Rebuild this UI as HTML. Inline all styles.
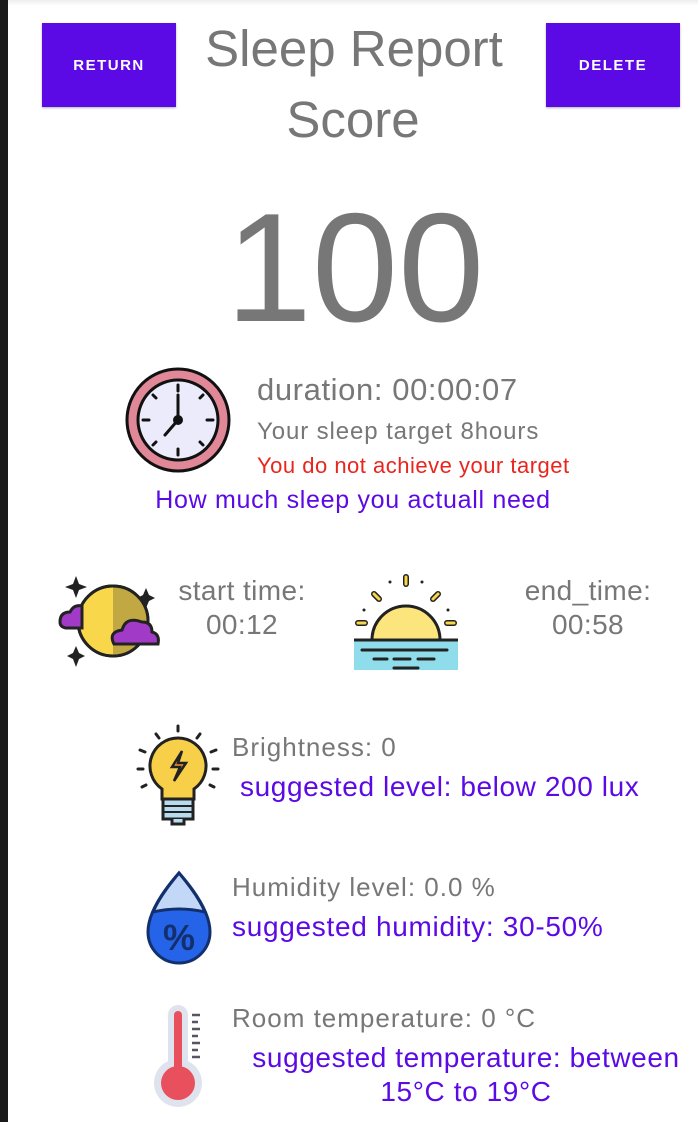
<!DOCTYPE html>
<html><head><meta charset="utf-8"><style>
body{margin:0;width:698px;height:1122px;background:#fff;position:relative;overflow:hidden;font-family:"Liberation Sans",sans-serif;color:#777}
.a{position:absolute;white-space:nowrap}
.btn{position:absolute;top:23px;width:134px;height:84px;background:#5b0ae6;color:#fff;font-size:15px;font-weight:bold;letter-spacing:1.5px;display:flex;align-items:center;justify-content:center;box-shadow:0 1px 2px rgba(0,0,0,.3)}
.c{text-align:center;transform:translateX(-50%)}
.p{color:#5b0ae6}
</style></head><body>
<div class="a" style="left:0;top:0;width:8px;height:1122px;background:#1a1a1a"></div>
<div class="a" style="left:8px;top:0;width:690px;height:6px;background:linear-gradient(#eee,#fff)"></div>
<div class="btn" style="left:42px">RETURN</div>
<div class="btn" style="left:546px">DELETE</div>
<div class="a c" style="left:354px;top:22px;font-size:51px;line-height:54px">Sleep Report</div>
<div class="a c" style="left:353px;top:93px;font-size:51px;line-height:54px">Score</div>
<div class="a c" style="left:355px;top:190px;font-size:155px;line-height:155px">100</div>

<svg class="a" style="left:125px;top:367px" width="106" height="106" viewBox="0 0 106 106">
<circle cx="53" cy="53" r="51" fill="#e08898" stroke="#111" stroke-width="3"/>
<circle cx="53" cy="53" r="40" fill="#ecebfb" stroke="#111" stroke-width="3"/>
<g stroke="#111" stroke-width="3" stroke-linecap="round">
<line x1="53" y1="18" x2="53" y2="24"/><line x1="53" y1="82" x2="53" y2="88"/><line x1="18" y1="53" x2="24" y2="53"/><line x1="82" y1="53" x2="88" y2="53"/>
<line x1="28" y1="28" x2="31" y2="31"/><line x1="78" y1="28" x2="75" y2="31"/><line x1="28" y1="78" x2="31" y2="75"/><line x1="78" y1="78" x2="75" y2="75"/>
<line x1="53" y1="53" x2="53" y2="28"/><line x1="53" y1="53" x2="40" y2="68"/></g>
<circle cx="53" cy="53" r="5" fill="#111"/></svg>
<div class="a" style="left:257px;top:372px;font-size:31px;letter-spacing:0.6px">duration: 00:00:07</div>
<div class="a" style="left:257px;top:418px;font-size:24px;letter-spacing:0.9px">Your sleep target 8hours</div>
<div class="a" style="left:257px;top:453px;font-size:22px;letter-spacing:0.5px;color:#e8261e">You do not achieve your target</div>
<div class="a c p" style="left:353px;top:486px;font-size:25px;letter-spacing:0.7px">How much sleep you actuall need</div>

<svg class="a" style="left:56px;top:574px" width="106" height="96" viewBox="0 0 106 96">
<circle cx="57" cy="47" r="35" fill="#f8d84a" stroke="#222" stroke-width="3"/>
<path d="M57 12 A35 35 0 0 1 57 82Z" fill="#c2a842"/>
<circle cx="57" cy="47" r="35" fill="none" stroke="#222" stroke-width="3"/>
<path d="M4 48 q0-10 10-10 q4-8 12-6 v22 h-16 q-6-1-6-6z" fill="#a23ac8" stroke="#222" stroke-width="3"/>
<path d="M58 70 q-6-12 8-14 q4-14 20-8 q10 0 10 10 q8 2 6 12 z" fill="#a23ac8" stroke="#222" stroke-width="3"/>
<path d="M20 2 l3 8 8 3-8 3-3 8-3-8-8-3 8-3z M90 14 l3 7 6 3-6 3-3 7-3-7-6-3 6-3z M20 72 l3 7 6 3-6 3-3 8-3-8-6-3 6-3z" fill="#222"/></svg>
<div class="a c" style="left:242px;top:574px;font-size:28px;letter-spacing:0.4px;line-height:34px">start time:<br>00:12</div>

<svg class="a" style="left:352px;top:572px" width="108" height="100" viewBox="0 0 108 100">
<path d="M20 68 a34 34 0 0 1 68 0z" fill="#fbe57c" stroke="#222" stroke-width="3"/>
<rect x="2" y="68" width="104" height="30" fill="#8fdcea"/>
<line x1="2" y1="68" x2="106" y2="68" stroke="#222" stroke-width="3"/>
<g stroke="#222" stroke-width="3" stroke-linecap="round"><line x1="10" y1="78" x2="95" y2="78"/><line x1="22" y1="87" x2="35" y2="87"/><line x1="42" y1="87" x2="58" y2="87"/><line x1="66" y1="87" x2="82" y2="87"/><line x1="42" y1="96" x2="66" y2="96"/></g>
<g stroke="#222" stroke-width="6" stroke-linecap="round"><line x1="54" y1="5" x2="54" y2="12"/><line x1="22" y1="22" x2="27" y2="27"/><line x1="86" y1="22" x2="81" y2="27"/><line x1="6" y1="51" x2="13" y2="51"/><line x1="95" y1="51" x2="102" y2="51"/></g>
<g stroke="#f8d84a" stroke-width="3" stroke-linecap="round"><line x1="54" y1="5" x2="54" y2="12"/><line x1="22" y1="22" x2="27" y2="27"/><line x1="86" y1="22" x2="81" y2="27"/><line x1="6" y1="51" x2="13" y2="51"/><line x1="95" y1="51" x2="102" y2="51"/></g>
<g fill="#222"><circle cx="38" cy="10" r="1.5"/><circle cx="70" cy="10" r="1.5"/><circle cx="12" cy="38" r="1.5"/><circle cx="96" cy="38" r="1.5"/></g></svg>
<div class="a c" style="left:588px;top:574px;font-size:28px;letter-spacing:0.4px;line-height:34px">end_time:<br>00:58</div>

<svg class="a" style="left:136px;top:724px" width="84" height="108" viewBox="0 0 84 108">
<g stroke="#222" stroke-width="3" stroke-linecap="round"><line x1="42" y1="2" x2="42" y2="7"/><line x1="20" y1="10" x2="23" y2="14"/><line x1="64" y1="10" x2="61" y2="14"/><line x1="4" y1="26" x2="9" y2="28"/><line x1="80" y1="26" x2="75" y2="28"/><line x1="2" y1="45" x2="7" y2="45"/><line x1="82" y1="45" x2="77" y2="45"/><line x1="6" y1="63" x2="10" y2="61"/><line x1="78" y1="63" x2="74" y2="61"/></g>
<path d="M42 14 a28 28 0 0 0-16 51 v10 h32 v-10 a28 28 0 0 0-16-51z" fill="#f8cf48" stroke="#222" stroke-width="3"/>
<path d="M46 27 l-10 16 h8 l-6 14 12-18 h-8z" fill="#f0962e" stroke="#222" stroke-width="2.5"/>
<rect x="27" y="75" width="30" height="20" fill="#b8dcee" stroke="#222" stroke-width="3"/>
<line x1="27" y1="82" x2="57" y2="82" stroke="#222" stroke-width="2"/><line x1="27" y1="88" x2="57" y2="88" stroke="#222" stroke-width="2"/>
<path d="M36 95 v5 h12 v-5" fill="#b8dcee" stroke="#222" stroke-width="3"/></svg>
<div class="a" style="left:232px;top:732px;font-size:26px;letter-spacing:1px">Brightness: 0</div>
<div class="a p" style="left:240px;top:771px;font-size:28px;letter-spacing:0.6px">suggested level: below 200 lux</div>

<svg class="a" style="left:144px;top:870px" width="70" height="96" viewBox="0 0 70 96">
<path d="M35 3 C20 20 4 42 4 62 a31 31 0 0 0 62 0 C66 42 50 20 35 3z" fill="#2563e8" stroke="#13306e" stroke-width="3"/>
<path d="M35 3 C24 16 14 30 9 42 q26-6 52 0 C56 30 46 16 35 3z" fill="#c3d7f7" stroke="#13306e" stroke-width="3"/>
<text x="35" y="80" text-anchor="middle" font-size="36" font-weight="bold" fill="#13306e" font-family="Liberation Sans">%</text></svg>
<div class="a" style="left:232px;top:872px;font-size:26px;letter-spacing:1px">Humidity level: 0.0 %</div>
<div class="a p" style="left:232px;top:911px;font-size:28px;letter-spacing:0.7px">suggested humidity: 30-50%</div>

<svg class="a" style="left:152px;top:1003px" width="56" height="106" viewBox="0 0 56 106">
<rect x="16" y="2" width="20" height="80" rx="10" fill="#dfe3ee"/>
<circle cx="26" cy="80" r="24" fill="#dfe3ee"/>
<rect x="22" y="8" width="8" height="72" rx="4" fill="#e8505e"/>
<circle cx="26" cy="80" r="17" fill="#e8505e"/>
<g stroke="#556" stroke-width="2.5"><line x1="40" y1="12" x2="48" y2="12"/><line x1="40" y1="19" x2="46" y2="19"/><line x1="40" y1="26" x2="48" y2="26"/><line x1="40" y1="33" x2="46" y2="33"/><line x1="40" y1="40" x2="48" y2="40"/><line x1="40" y1="47" x2="46" y2="47"/><line x1="40" y1="54" x2="48" y2="54"/></g></svg>
<div class="a" style="left:232px;top:1003px;font-size:26px;letter-spacing:1px">Room temperature: 0 °C</div>
<div class="a c p" style="left:466px;top:1041px;font-size:28px;letter-spacing:0.6px;line-height:34px">suggested temperature: between<br>15°C to 19°C</div>
</body></html>
